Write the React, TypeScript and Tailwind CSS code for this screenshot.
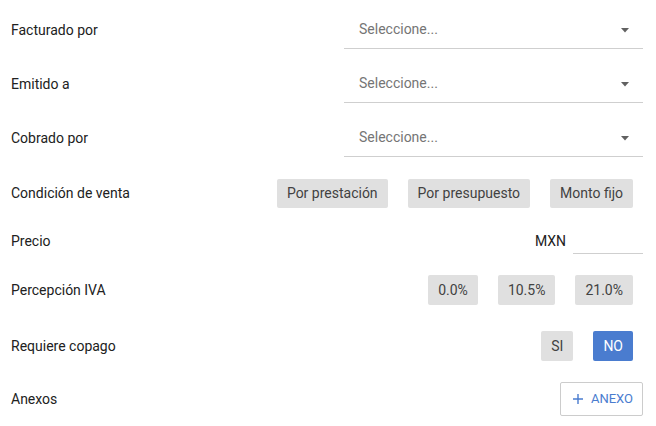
import { useState } from "react"

const font = { fontFamily: "Roboto, 'Liberation Sans', sans-serif" }

const Label = ({ children }: { children: React.ReactNode }) => (
  <div className="text-[14px] text-[#212121]">{children}</div>
)

const SelectField = () => (
  <div className="flex h-[38px] w-[299px] items-center justify-between border-b border-[#cfcfcf] pb-[1px] pl-[15px] pr-[14px]">
    <span className="text-[14px] text-[#757575]">Seleccione...</span>
    <svg width="8" height="5" viewBox="0 0 8 5" className="mt-[3px]">
      <path d="M0 0h8L4 4.5z" fill="#616161" />
    </svg>
  </div>
)

const Toggle = ({
  label,
  active = false,
  h = "h-[30px]",
}: {
  label: string
  active?: boolean
  h?: string
}) => (
  <button
    className={
      active
        ? `mx-[10px] ${h} rounded-[2px] bg-[#4a7ccf] px-[10px] text-[14px] text-white`
        : `mx-[10px] ${h} rounded-[2px] bg-[#e0e0e0] px-[10px] text-[14px] text-[#424242]`
    }
  >
    {label}
  </button>
)

export default function App() {
  const [copago] = useState("NO")

  return (
    <div style={font} className="flex w-[656px] flex-col bg-white pl-[11px] pr-[13px] pt-[3px]">
      <div className="flex h-[54px] items-center justify-between">
        <Label>Facturado por</Label>
        <SelectField />
      </div>
      <div className="flex h-[54px] items-center justify-between">
        <Label>Emitido a</Label>
        <SelectField />
      </div>
      <div className="flex h-[54px] items-center justify-between">
        <Label>Cobrado por</Label>
        <SelectField />
      </div>

      <div className="flex h-[56px] items-center justify-between">
        <Label>Condición de venta</Label>
        <div className="flex items-center">
          <Toggle label="Por prestación" h="h-[29px]" />
          <Toggle label="Por presupuesto" h="h-[29px]" />
          <Toggle label="Monto fijo" h="h-[29px]" />
        </div>
      </div>

      <div className="flex h-[40px] items-center justify-between">
        <Label>Precio</Label>
        <div className="flex items-center gap-[7px]">
          <span className="text-[14px] text-[#212121]">MXN</span>
          <div className="h-[26px] w-[70px] border-b border-[#cfcfcf]" />
        </div>
      </div>

      <div className="flex h-[58px] items-center justify-between">
        <Label>Percepción IVA</Label>
        <div className="flex items-center">
          <Toggle label="0.0%" />
          <Toggle label="10.5%" />
          <Toggle label="21.0%" />
        </div>
      </div>

      <div className="flex h-[54px] items-center justify-between">
        <Label>Requiere copago</Label>
        <div className="flex items-center">
          <Toggle label="SI" active={copago === "SI"} />
          <Toggle label="NO" active={copago === "NO"} />
        </div>
      </div>

      <div className="flex h-[52px] items-center justify-between">
        <Label>Anexos</Label>
        <button className="flex h-[34px] items-center gap-[8px] rounded-[2px] border border-[#cccccc] pl-[12px] pr-[9px] text-[13px] text-[#4a7ccf]">
          <svg width="10" height="10" viewBox="0 0 10 10">
            <path d="M5 0v10M0 5h10" stroke="#4a7ccf" strokeWidth="1.4" />
          </svg>
          ANEXO
        </button>
      </div>
    </div>
  )
}
